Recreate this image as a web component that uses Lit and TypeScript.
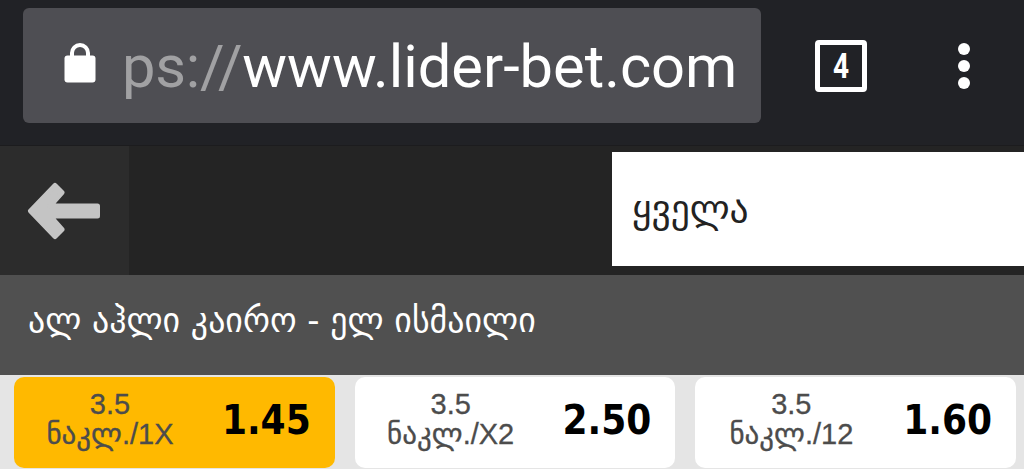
import { LitElement, html, css } from "lit";
import { customElement } from "lit/decorators.js";

const odds = [
  { label: "ნაკლ./1X", value: "1.45", active: true },
  { label: "ნაკლ./X2", value: "2.50", active: false },
  { label: "ნაკლ./12", value: "1.60", active: false },
];

@customElement("app-root")
export class AppRoot extends LitElement {
  static styles = css`
    :host { display: block; width: 1024px; height: 469px; overflow: hidden; background: #e5e5e5; font-family: "Liberation Sans", "DejaVu Sans", sans-serif; }
    .toolbar { height: 146px; box-sizing: border-box; background: #212226; padding: 8px 0 0 23px; display: flex; align-items: flex-start; border-bottom: 1px solid #1c1c1e; }
    .url { width: 738px; height: 115px; box-sizing: border-box; background: #4e4e53; border-radius: 6px; display: flex; align-items: center; padding-left: 41px; font-family: Roboto, sans-serif; font-size: 59.6px; color: #fff; white-space: nowrap; overflow: hidden; }
    .lock { width: 32px; height: 41px; flex: none; margin-right: 26px; margin-top: -6px; display: block; }
    .scheme { color: #a1a1a3; letter-spacing: -0.2px; }
    .url-text { margin-top: 2px; }
    .tabs { width: 52px; height: 52px; margin: 32px 0 0 54px; box-sizing: border-box; border: 5px solid #fff; border-radius: 4px; color: #fff; display: flex; align-items: center; justify-content: center; font-family: "Roboto", sans-serif; font-weight: 700; font-size: 35px; }
    .tabs span { display: block; transform: scaleX(0.8); }
    .dots { margin: 35px 0 0 91px; display: flex; flex-direction: column; gap: 5px; }
    .dots i { display: block; width: 12px; height: 12px; border-radius: 50%; background: #fff; }
    .nav { height: 129px; background: #242424; display: flex; }
    .back { width: 129px; background: #2c2c2c; display: flex; align-items: center; padding-left: 27px; box-sizing: border-box; }
    .back svg { display: block; width: 74px; height: 58px; }
    .spacer { flex: 1; }
    .select { width: 412px; height: 114px; margin-top: 6px; box-sizing: border-box; background: #fff; padding-left: 20px; display: flex; align-items: center; font-family: "DejaVu Sans", sans-serif; font-size: 37.5px; color: #222; }
    .match { height: 100px; box-sizing: border-box; background: #505050; color: #fff; padding-left: 28px; padding-bottom: 10px; display: flex; align-items: center; font-family: "DejaVu Sans", sans-serif; font-size: 33.9px; white-space: nowrap; }
    .odds { display: flex; gap: 20px; padding: 2px 8px 1px 14px; height: 94px; box-sizing: border-box; }
    .card { width: 321px; box-sizing: border-box; background: #fff; border-radius: 10px; display: flex; align-items: center; padding: 0 24px 0 30px; justify-content: space-between; }
    .card.active { background: #ffb900; }
    .label { width: 132px; text-align: center; color: #4c4c4c; font-size: 29px; line-height: 30px; font-family: "Liberation Sans", "DejaVu Sans", sans-serif; margin-bottom: 8px; white-space: nowrap; -webkit-text-stroke: 0.3px #4c4c4c; }
    .value { font-family: "DejaVu Sans Condensed", "DejaVu Sans", sans-serif; font-weight: 700; font-size: 40px; color: #000; margin-bottom: 6px; }
  `;

  render() {
    return html`
      <div class="toolbar">
        <div class="url">
          <svg class="lock" viewBox="0 0 32 41" aria-hidden="true">
            <path fill="none" stroke="#fff" stroke-width="4" d="M8 17 V11 a8 8 0 0 1 16 0 V17" />
            <rect x="0.5" y="13.5" width="31" height="27" rx="3" fill="#fff" />
          </svg>
          <span class="url-text"><span class="scheme">ps://</span>www.lider-bet.com</span>
        </div>
        <div class="tabs"><span>4</span></div>
        <div class="dots"><i></i><i></i><i></i></div>
      </div>
      <div class="nav">
        <div class="back">
          <svg viewBox="0 0 74 58" aria-hidden="true">
            <path fill="#c4c4c4" stroke="#c4c4c4" stroke-width="5" stroke-linejoin="round" d="M3.5 29 L28 3.5 L35 10.5 L23 24 H70.5 V34 H23 L35 47.5 L28 54.5 Z" />
          </svg>
        </div>
        <div class="spacer"></div>
        <div class="select">ყველა</div>
      </div>
      <div class="match">ალ აჰლი კაირო - ელ ისმაილი</div>
      <div class="odds">
        ${odds.map(
          (o) => html`
            <div class="card ${o.active ? "active" : ""}">
              <div class="label">3.5<br />${o.label}</div>
              <div class="value">${o.value}</div>
            </div>
          `
        )}
      </div>
    `;
  }
}
